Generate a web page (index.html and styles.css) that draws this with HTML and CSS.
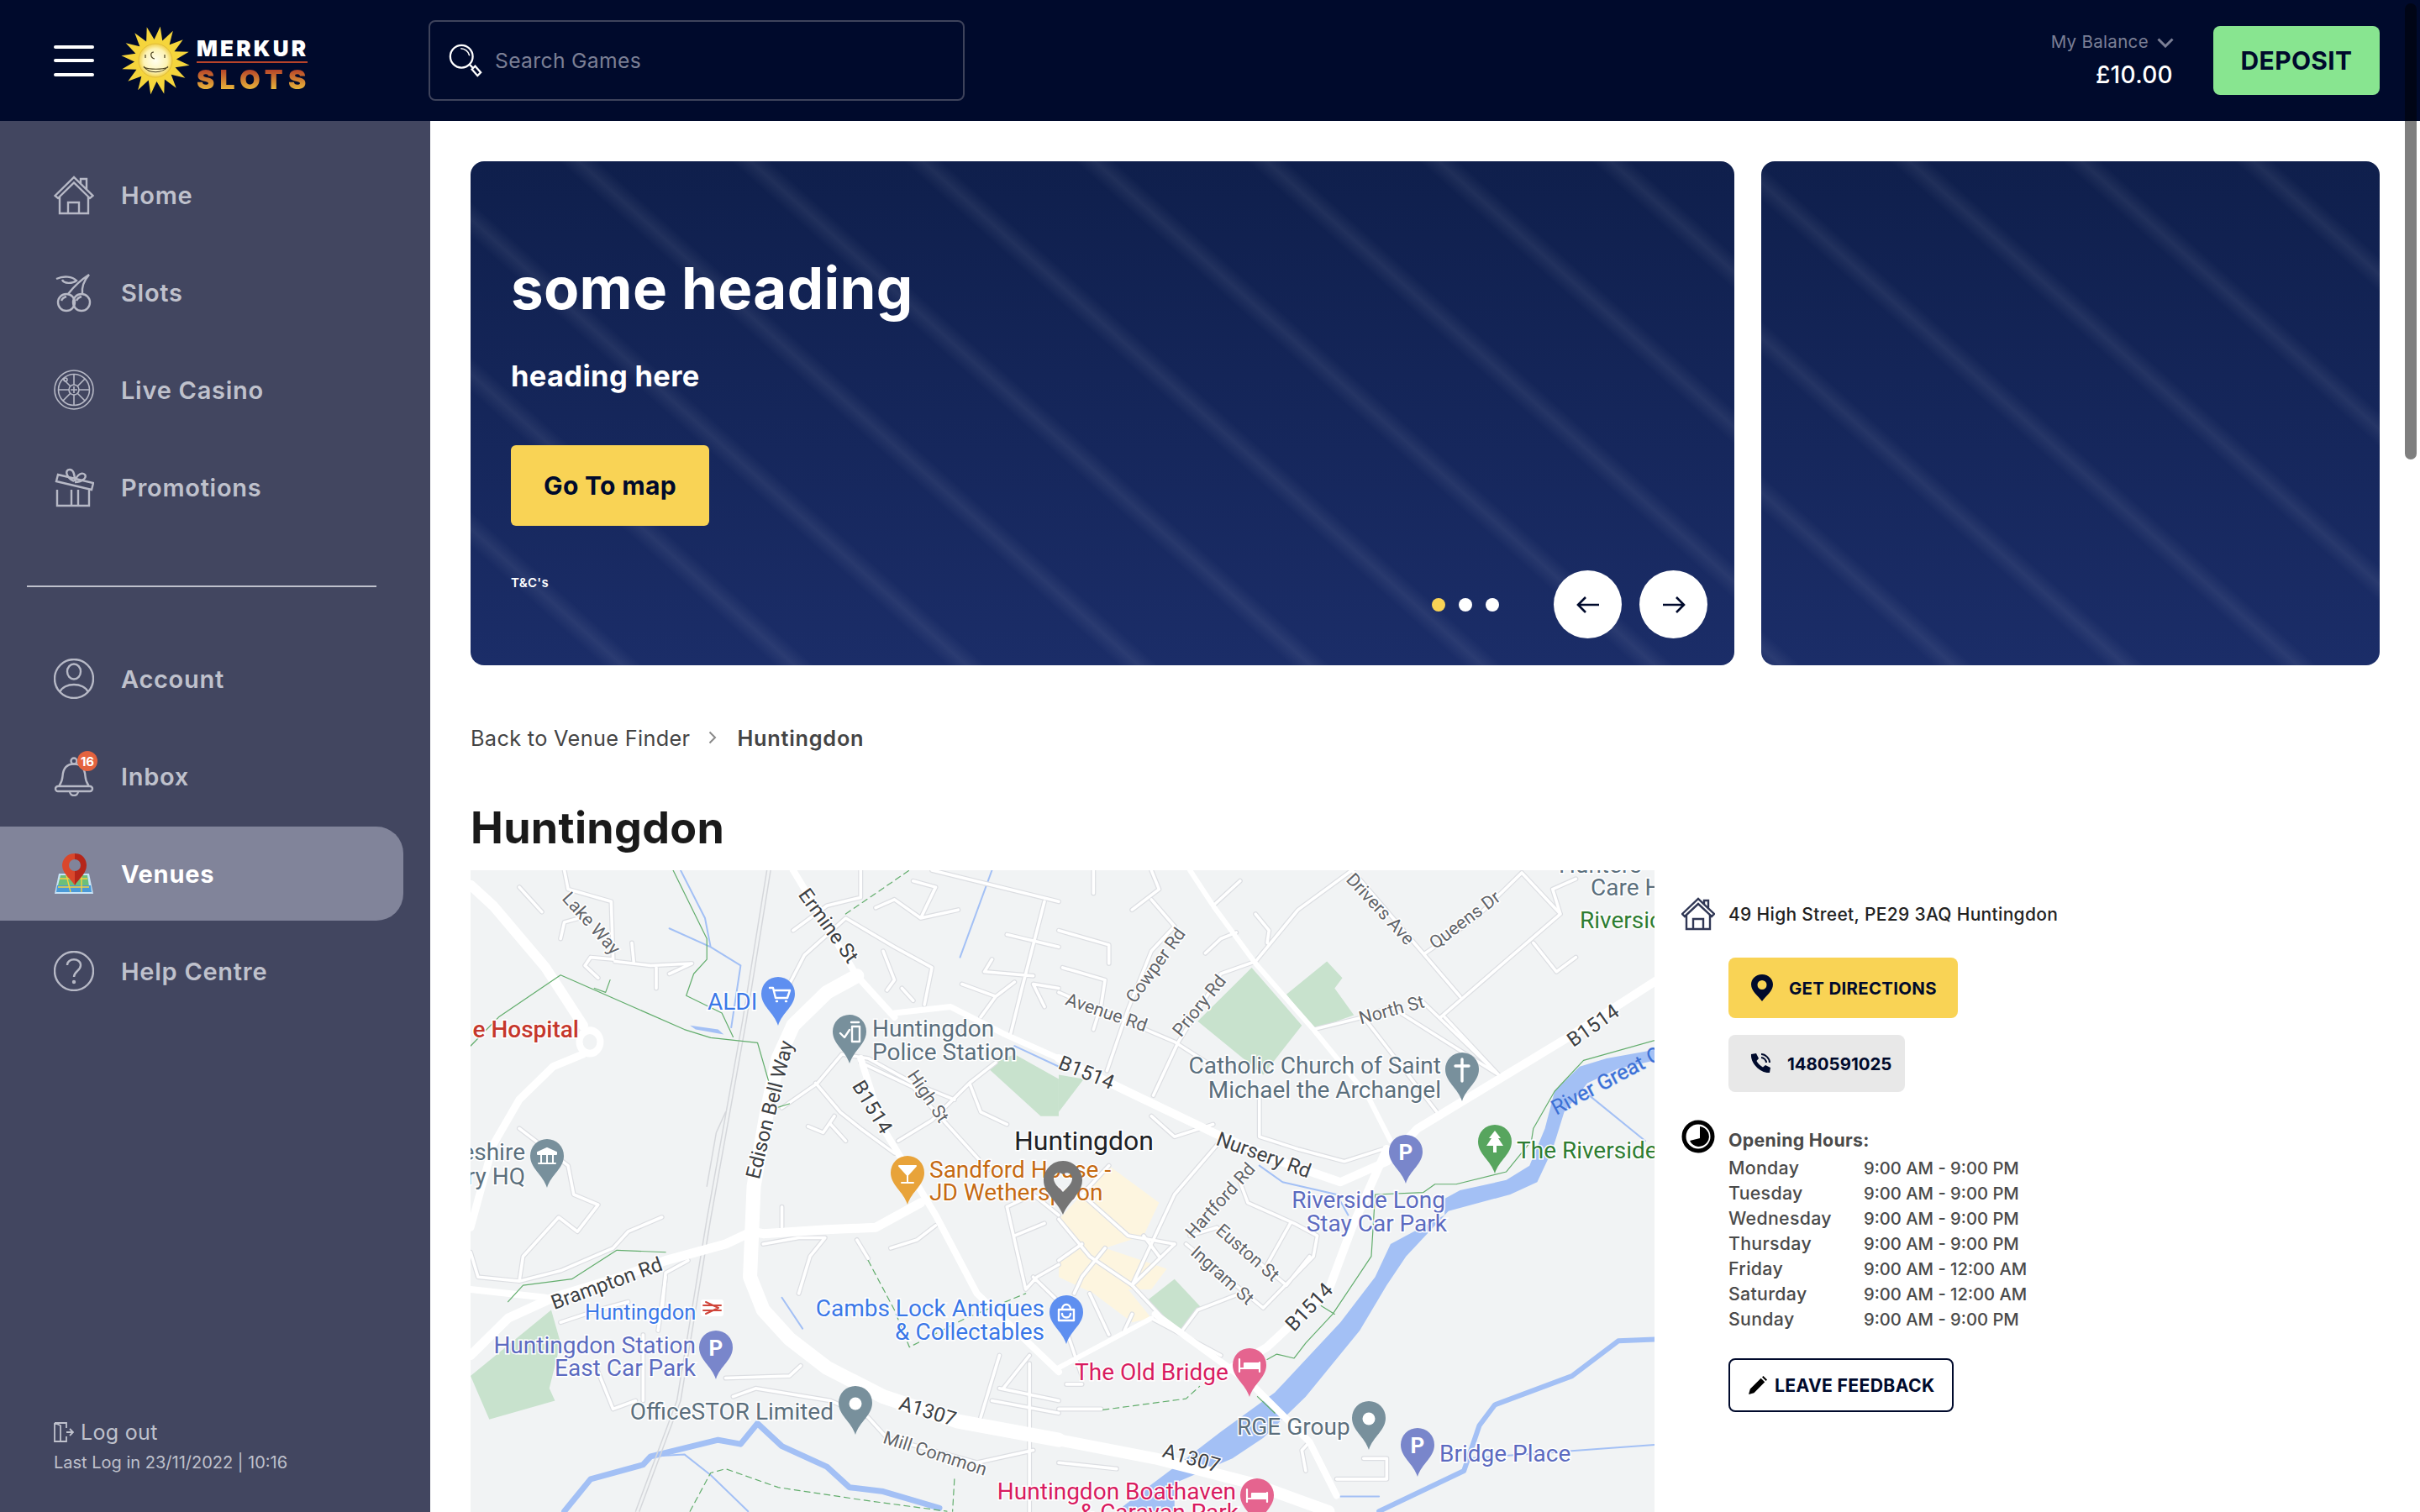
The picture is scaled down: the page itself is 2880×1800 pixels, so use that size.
FILE: index.html
```html
<!DOCTYPE html>
<html lang="en">
<head>
  <meta charset="UTF-8" />
  <title>Huntingdon - Merkur Slots</title>
  <link rel="stylesheet" href="styles.css">
</head>
<body>

<header class="topbar">
  <div class="burger"><span></span><span></span><span></span></div>
  <a class="logo">
    <svg class="logo-sun" viewBox="-42 -42 84 84">
      <defs>
        <radialGradient id="face"><stop offset="0" stop-color="#fffef0"/><stop offset=".7" stop-color="#fdf3b4"/><stop offset="1" stop-color="#f0d048"/></radialGradient>
      </defs>
      <polygon fill="#f5d53c" transform="rotate(8)" points="41,0 24.5,4.9 37.9,15.7 20.8,13.9 29,29 13.9,20.8 15.7,37.9 4.9,24.5 0,41 -4.9,24.5 -15.7,37.9 -13.9,20.8 -29,29 -20.8,13.9 -37.9,15.7 -24.5,4.9 -41,0 -24.5,-4.9 -37.9,-15.7 -20.8,-13.9 -29,-29 -13.9,-20.8 -15.7,-37.9 -4.9,-24.5 0,-41 4.9,-24.5 15.7,-37.9 13.9,-20.8 29,-29 20.8,-13.9 37.9,-15.7 24.5,-4.9"/>
      <circle r="20" fill="url(#face)" stroke="#e3bd3a"/>
      <path d="M-14 7 C-8 16 8 16 15 7 M-14 8 C-7 11 8 11 15 8 M-2 -10 C-7 -10 -6 -3 -1 -2 M-12 -7 v4 M11 -7 v4" fill="none" stroke="#4a4020" stroke-width="1.2"/>
    </svg>
    <span class="logo-words">
      <span class="logo-merkur">MERKUR</span>
      <span class="logo-slots">SLOTS</span>
    </span>
  </a>
  <div class="search">
    <svg class="search-icon" viewBox="0 0 44 44">
      <circle cx="17" cy="17" r="14" fill="none" stroke="#fff" stroke-width="2.4"/>
      <path d="M16 7 C21 7 26 11 27 16" fill="none" stroke="#fff" stroke-width="1.6"/>
      <path d="M27 27 L31 31 M30 33 L34 29 L41 37 L37 41Z" fill="none" stroke="#fff" stroke-width="2.4"/>
    </svg>
    <span>Search Games</span>
  </div>
  <div class="balance">
    <div class="balance-label">My Balance
      <svg viewBox="0 0 20 12" class="balance-chev"><path d="M1.5 1.5 L10 10 L18.5 1.5" fill="none" stroke="#7b7f95" stroke-width="3"/></svg>
    </div>
    <div class="balance-amount">£10.00</div>
  </div>
  <a class="deposit">DEPOSIT</a>
</header>

<div class="page">
  <nav class="sidebar">
    <a class="nav-item">
      <svg class="nav-icon" viewBox="0 0 48 48"><path d="M1.5 25 L24 3 L46.5 25 L43 28 L24 9.5 L5 28Z M7 26 V46 H41 V26 M17 46 V33 H30 V46 M32 10 V5 H39 V17"/></svg>
      Home
    </a>
    <a class="nav-item">
      <svg class="nav-icon" viewBox="0 0 48 48"><circle cx="15" cy="36" r="10"/><circle cx="33" cy="36" r="10"/><path d="M9 34 C10 31 12 30 15 29 M27 34 C28 31 30 30 33 29 M17 26 C24 17 31 10 42 3 C36 10 33 18 34 26 M3 8 C12 4 22 5 27 10 C22 14 12 14 10 9"/></svg>
      Slots
    </a>
    <a class="nav-item">
      <svg class="nav-icon thin" viewBox="0 0 48 48"><circle cx="24" cy="24" r="23"/><circle cx="24" cy="24" r="18.5"/><circle cx="24" cy="24" r="6"/><path d="M24 20 V28 M20 24 H28 M24 5.5 V18 M24 30 V42.5 M5.5 24 H18 M30 24 H42.5 M11 11 L19.5 19.5 M28.5 28.5 L37 37 M37 11 L28.5 19.5 M19.5 28.5 L11 37"/><circle cx="14" cy="12" r="2"/></svg>
      Live Casino
    </a>
    <a class="nav-item">
      <svg class="nav-icon" viewBox="0 0 48 48"><path d="M4 27 V46 H42 V27 M21 27 V46 M29 27 V46 M3 17 L45 27 L47 19 L5 9Z M24 17 C14 12 13 3 19 3 C24 3 25 10 25 17 C28 8 34 6 37 9 C40 13 33 18 25 18"/></svg>
      Promotions
    </a>
    <div class="nav-rule"></div>
    <a class="nav-item">
      <svg class="nav-icon" viewBox="0 0 48 48"><circle cx="24" cy="24" r="23"/><ellipse cx="24" cy="15.5" rx="8" ry="9"/><path d="M7 40 C12 28 36 28 41 40"/></svg>
      Account
    </a>
    <a class="nav-item">
      <span class="bell">
        <svg class="nav-icon" viewBox="0 0 48 48"><circle cx="24" cy="6" r="3.5"/><path d="M24 9.5 C14 9.5 11 16 10.5 24 C10 31 8 33 6 36 H42 C40 33 38 31 37.5 24 C37 16 34 9.5 24 9.5Z M5 36 H43 A3 3 0 0 1 43 42 H5 A3 3 0 0 1 5 36Z M19 42 A5 5 0 0 0 29 42"/></svg>
        <span class="badge">16</span>
      </span>
      Inbox
    </a>
    <a class="nav-item active">
      <svg class="nav-icon plain" viewBox="0 0 48 48">
        <path d="M6 24 H42 L47 48 H1Z" fill="#c7e4f8"/>
        <path d="M8 26 H24 V38 H5Z" fill="#6cbf7a"/>
        <path d="M24 26 H40 L43 46 H24Z" fill="#6cbf7a"/>
        <path d="M4 38 H44 L45 46 H3Z" fill="#4a9ad8"/>
        <path d="M7 30 H40 M5 40 H42 M15 26 L20 46 M33 26 L33 46" fill="none" stroke="#f6d23f" stroke-width="1.4"/>
        <path d="M25 0 C15 0 10 8 10 14 C10 24 20 30 25 38Z" fill="#d9472b"/>
        <path d="M25 0 C35 0 39 8 39 14 C39 24 30 30 25 38Z" fill="#b5261a"/>
        <circle cx="25" cy="14" r="7" fill="#81849a"/>
      </svg>
      Venues
    </a>
    <a class="nav-item">
      <svg class="nav-icon" viewBox="0 0 48 48"><circle cx="24" cy="24" r="23"/><path d="M16 17 C16 8 32 8 32 17 C32 24 24 24 24 31"/><circle cx="24" cy="37" r="1"/></svg>
      Help Centre
    </a>
    <div class="side-foot">
      <div class="logout">
        <svg viewBox="0 0 24 26"><path d="M1 2 H15 V8 M15 18 V24 H8 M1 2 V24 H8 V5 L1 2 M15 13 H23 M19 9 L23 13 L19 17" fill="none" stroke="#bfc1cc" stroke-width="1.8"/></svg>
        Log out
      </div>
      <div class="last-log">Last Log in 23/11/2022 | 10:16</div>
    </div>
  </nav>

  <main class="content">
    <section class="hero">
      <div class="slide slide-main">
        <h1 class="slide-title">some heading</h1>
        <h2 class="slide-sub">heading here</h2>
        <a class="slide-btn">Go To map</a>
        <div class="slide-terms">T&amp;C's</div>
        <div class="slide-controls">
          <span class="dot on"></span><span class="dot"></span><span class="dot"></span>
          <span class="arrow first"><svg viewBox="0 0 28 22"><path d="M27 11 H2 M11 2 L2 11 L11 20" fill="none" stroke="#000a2c" stroke-width="2.6"/></svg></span>
          <span class="arrow"><svg viewBox="0 0 28 22"><path d="M1 11 H26 M17 2 L26 11 L17 20" fill="none" stroke="#000a2c" stroke-width="2.6"/></svg></span>
        </div>
      </div>
      <div class="slide slide-next"></div>
    </section>

    <div class="crumbs">
      <span>Back to Venue Finder</span>
      <svg viewBox="0 0 10 16"><path d="M1.5 1.5 L8 8 L1.5 14.5" fill="none" stroke="#8a8a8a" stroke-width="2"/></svg>
      <b>Huntingdon</b>
    </div>
    <h2 class="venue-name">Huntingdon</h2>

    <div class="venue">
      <svg class="map" viewBox="0 0 1409 765">
        <defs>
          <path id="pin" fill="inherit" d="M20 0 A20 20 0 0 1 40 20 C40 35 25 42 20 58 C15 42 0 35 0 20 A20 20 0 0 1 20 0Z"/>
          <g id="minor">
            <g transform="scale(.4464 .4911) translate(0 -14)">
              <path d="M130 55 L190 115 M250 14 L260 60 L375 90 L380 230 L320 225 L305 245 L340 275 M240 180 L250 140 L290 130 M385 235 L480 245 L590 240 L530 265 M495 250 V300 M430 190 L435 235"/>
              <path d="M130 640 L260 730 L275 800 L340 825 L285 890 L235 855 L140 950 L130 1010 L20 1000 L0 940 M510 855 L420 890 L380 930 L240 985 L130 1010 M580 960 L520 990 L510 1090"/>
              <path d="M830 590 L925 530 L990 460 L1060 470 L1180 530 L1290 570 M850 290 L890 220 L1000 130 L1130 200 L1230 250 L1210 340 M860 160 L950 100 L1040 80 L1040 14 M1080 105 L1130 85 L1200 130 L1300 110 M1180 40 L1240 55 L1200 130 M1100 210 L1130 280 L1110 305 M1150 300 L1180 330"/>
              <path d="M1230 14 L1568 90 M1430 170 L1568 200 M1530 90 L1470 300 L1440 410 M1310 290 L1400 320 L1450 285 M1400 320 L1360 370 M1390 230 L1370 260 L1500 270 M1568 300 L1500 290 L1530 345"/>
              <path d="M920 530 L985 600 L1040 640 L1130 700 M900 635 L940 650 L970 610 M960 630 L1000 670 M1040 480 L1180 540 L1320 680 L1380 740 M1140 670 L1230 620 L1330 530 L1400 480 M1330 530 L1360 600 L1430 630"/>
              <path d="M780 920 L875 905 L945 905 L905 950 L875 1040 M830 880 V830 M1030 910 L1060 955 M1120 930 L1190 910 L1240 875 M1430 830 L1480 1030 L1510 1000 L1568 970 M1430 830 L1500 800 L1568 850 M1450 900 L1530 870 M1500 1000 L1568 1060"/>
              <path d="M1410 1190 L1360 1340 M1490 1210 V1568 M1410 1270 L1568 1300 M1390 1300 L1568 1330 M1490 1190 L1420 1270 M700 1290 L760 1270 L960 1300 L1060 1340 L1110 1390 L1350 1450 L1500 1420 M680 1245 L850 1240 L880 1215 M340 1230 L380 1320 L440 1300 M240 1110 L340 1080 L420 1060 M460 1140 L460 1300 M520 1000 L500 1130"/>
            </g>
            <g transform="translate(700 0) scale(.4592 .4911) translate(0 -14)">
              <path d="M0 160 L130 195 L130 240 M10 250 L120 280 L110 340 L90 400 M90 14 V70 M190 110 L260 60 L240 14 M240 85 L300 150 M400 100 L470 40 M0 310 L300 430 L400 490 M510 235 L620 110 L760 14 M510 120 L545 160 L540 190 M380 215 L420 180 L460 165"/>
              <path d="M125 500 L180 350 L240 210 L300 150 M245 560 L310 430 L420 265 L510 235 M660 400 L790 370 L860 345 M790 370 L980 600 M860 345 L1140 510 M940 330 L1140 510 M1040 320 L760 14 M990 370 L1300 120 L1200 20 L1080 130 L950 215 M1000 370 L1140 510 M1230 190 L1290 260 L1340 225 M1280 60 L1340 35 M1300 120 L1280 60"/>
              <path d="M520 560 V660 L620 690 L740 720 L840 690 M240 610 L300 660 L400 630 M470 770 L490 820 L610 870 L670 900 L660 950 L530 1075 M600 870 L540 970 M410 880 L590 1020 M590 1020 L650 950 M340 900 L410 880 M330 920 L530 1075"/>
              <path d="M410 680 L300 800 L190 1020 L300 1130 M300 920 L190 1020 M470 1040 L360 1080 L320 1130 M240 1100 L420 1190 M80 1040 L130 1140 M190 1090 L170 1130 M650 1400 L630 1420 L640 1470 M790 1440 H850 V1490 H720 M0 1320 L110 1320 M0 1450 L150 1465 M20 1260 H60"/>
              <path d="M0 860 L80 950 L190 1020 M60 800 L180 900 L300 920 M130 730 L60 800 M0 960 L60 920 M120 930 L60 1000 L40 1040 M220 900 L260 950 M20 1130 L60 1240"/>
            </g>
          </g>
        </defs>

        <!-- land use -->
        <g transform="translate(700 0) scale(.4592 .4911) translate(0 -14)">
          <polygon class="m-town" points="130,730 260,820 220,900 120,930 280,980 240,1030 180,1030 240,1100 190,1110 90,1040 0,1000 0,960 50,920 0,860 60,800"/>
          <polygon class="m-park" points="360,380 500,250 630,390 530,510"/>
          <polygon class="m-park" points="590,315 695,235 735,275 715,300 765,365 660,400"/>
          <polygon class="m-park" points="0,510 65,520 0,600"/>
          <polygon class="m-park" points="225,1060 300,1005 370,1075 320,1130"/>
          <polygon class="m-water" points="1568,445 1420,470 1350,490 1285,550 1260,640 1220,730 1160,765 1040,790 1000,810 1000,850 860,920 820,1000 730,1110 560,1280 420,1375 330,1440 230,1510 150,1568 300,1568 300,1500 450,1440 530,1390 640,1290 780,1130 850,1020 900,950 1010,840 1170,800 1240,770 1280,690 1310,600 1370,530 1450,495 1568,470"/>
          <path class="m-river w6" d="M830 1568 L1050 1470 L1090 1360 L1130 1310 L1330 1240 L1450 1155 L1568 1150"/>
          <path class="m-river w2" d="M1060 1440 L1568 1405 M1375 560 L1520 670 M520 730 L580 770 L720 800 L750 850 M730 1532 H830"/>
        </g>
        <g transform="scale(.4464 .4911) translate(0 -14)">
          <polygon class="m-park" points="0,1240 215,1080 240,1160 210,1270 225,1300 50,1345"/>
          <polygon class="m-park" points="1375,490 1450,460 1568,520 1568,610 1520,610"/>
          <polygon class="m-water" points="585,390 660,400 675,412 600,400"/>
          <path class="m-river w2" d="M530 155 L640 200 L720 245 L695 395 M560 14 L625 130 L640 200 M1390 14 L1305 225 M830 1050 L885 1125 M1450 440 L1568 490 M480 1435 L570 1430 L640 1480 L740 1568"/>
          <path class="m-river w7" d="M250 1568 L320 1490 L460 1455 L480 1435 L660 1395 L720 1405 L765 1355 L830 1410 L950 1460 L1010 1510 L1100 1520 L1250 1560"/>
        </g>

        <!-- roads -->
        <use href="#minor" class="m-case"/>
        <use href="#minor" class="m-minor"/>
        <g transform="scale(.4464 .4911) translate(0 -14)">
          <g class="m-rail">
            <path d="M800 14 L735 380 L640 860 L560 1300 L450 1568 M790 14 L725 380 L630 860 L550 1300 L440 1568 M680 600 L655 650 L630 780"/>
          </g>
          <path class="m-road w12" d="M0 50 L60 100 L200 250 L300 390"/>
          <path class="m-road w9" d="M300 460 L220 490 L130 570 L60 680 L0 880"/>
          <circle class="m-round" cx="318" cy="430" r="28"/>
          <path class="m-road w17" d="M1030 270 L950 310 L860 390 L820 470 L790 600 L755 780 L750 890 L745 1000 L780 1080 L850 1150 L950 1220 L1100 1290 L1300 1350 L1568 1395"/>
          <path class="m-road w11" d="M0 1190 L100 1100 L220 1050 L400 1000 L520 960 L680 920 L750 890 L780 895 L950 885 L1080 880 L1200 820"/>
          <path class="m-road w8" d="M0 1030 L200 1050"/>
          <path class="m-road w8" d="M860 14 L1030 270 L1130 370 M1040 470 L1100 640 L1240 850 L1350 1040 L1568 1230"/>
          <path class="m-road w7" d="M1130 360 L1280 345 L1420 410 L1568 470"/>
        </g>
        <g transform="translate(700 0) scale(.4592 .4911) translate(0 -14)">
          <path class="m-road w6" d="M340 14 L400 100 L510 240 L660 400 L800 560 L860 670"/>
          <path class="m-road w14" d="M0 1395 L250 1440 L500 1500 L700 1568"/>
          <path class="m-road w10" d="M0 470 L200 560 L400 650 L560 715 L730 770 L850 720 L930 640 L1310 425 L1568 270"/>
          <path class="m-road w10" d="M850 690 L760 880 L700 1030 L540 1170 L430 1230"/>
          <path class="m-road w8" d="M250 1090 L500 1260 L650 1400 L720 1530"/>
          <path class="m-road w6" d="M0 1220 L240 1100"/>
        </g>

        <!-- footpaths -->
        <g transform="scale(.4464 .4911) translate(0 -14)">
          <path class="m-path" d="M540 14 L630 180 L630 230 L595 265 L575 318 L670 360 L700 418 M0 440 L75 370 L240 268 L570 400 L640 420 L765 432 L785 495 L815 590 L850 580 M330 300 L360 310 L372 280 M100 1060 L140 1020 L270 1005 L390 935 L520 940"/>
          <path class="m-path dash" d="M1000 120 L1170 14 M1060 960 L1130 1080 L1170 1170 L1320 1100 L1480 1040 M585 1568 L640 1475 L680 1465 L820 1510 L1040 1540 L1270 1568 M1290 1490 L1285 1568"/>
        </g>
        <g transform="translate(700 0) scale(.4592 .4911) translate(0 -14)">
          <path class="m-path" d="M1568 420 L1360 475 L1285 550 L1230 640 L1225 670 L1160 745 L1030 775 L975 775 L945 795 L820 800 L810 950 L710 1090 L640 1160 L610 1197 L565 1187 L540 1200 M680 1070 L715 1090 M515 1290 L560 1330"/>
          <path class="m-path dash" d="M115 1322 L330 1295 L365 1265"/>
        </g>

        <!-- road names -->
        <g class="m-names small">
          <text transform="translate(144 63) rotate(48)">Lake Way</text>
          <text transform="translate(545 269) rotate(56)">High St</text>
          <text transform="translate(553 694) rotate(18)">Mill Common</text>
          <text transform="translate(757 169) rotate(19)">Avenue Rd</text>
          <text transform="translate(815 113) rotate(-54)">Cowper Rd</text>
          <text transform="translate(867 161) rotate(-51)">Priory Rd</text>
          <text transform="translate(1083 46) rotate(47)">Drivers Ave</text>
          <text transform="translate(1183 59) rotate(-37)">Queens Dr</text>
          <text transform="translate(1096 166) rotate(-15)">North St</text>
          <text transform="translate(892 393) rotate(-48)">Hartford Rd</text>
          <text transform="translate(925 455) rotate(41)">Euston St</text>
          <text transform="translate(895 482) rotate(42)">Ingram St</text>
        </g>
        <g class="m-names">
          <text transform="translate(426 66) rotate(54)">Ermine St</text>
          <text transform="translate(356 285) rotate(-76)">Edison Bell Way</text>
          <text transform="translate(478 282) rotate(59)">B1514</text>
          <text transform="translate(162 492) rotate(-20)">Brampton Rd</text>
          <text transform="translate(544 644) rotate(17)">A1307</text>
          <text transform="translate(733 241) rotate(22)">B1514</text>
          <text transform="translate(1336 185) rotate(-35)">B1514</text>
          <text transform="translate(998 520) rotate(-46)">B1514</text>
          <text transform="translate(944 339) rotate(20)">Nursery Rd</text>
          <text transform="translate(858 700) rotate(16)">A1307</text>
        </g>
        <text class="m-label river" transform="translate(1292 292) rotate(-28)">River Great Ouse</text>

        <!-- place labels -->
        <text class="m-label l-blue" x="282" y="166">ALDI</text>
        <text class="m-label l-red end" x="129" y="199">e Hospital</text>
        <text class="m-label l-slate" x="478" y="198">Huntingdon</text>
        <text class="m-label l-slate" x="478" y="226">Police Station</text>
        <text class="m-label l-slate end" x="65" y="345">eshire</text>
        <text class="m-label l-slate end" x="65" y="374">ry HQ</text>
        <text class="m-label l-blue station" x="136" y="535">Huntingdon</text>
        <text class="m-label l-purple end" x="268" y="575">Huntingdon Station</text>
        <text class="m-label l-purple end" x="268" y="602">East Car Park</text>
        <text class="m-label l-slate end" x="432" y="654">OfficeSTOR Limited</text>
        <text class="m-label l-orange" x="546" y="366">Sandford House -</text>
        <text class="m-label l-orange" x="546" y="393">JD Wetherspoon</text>
        <text class="m-town-name" x="647" y="333">Huntingdon</text>
        <text class="m-label l-blue end" x="683" y="531">Cambs Lock Antiques</text>
        <text class="m-label l-blue end" x="683" y="559">&amp; Collectables</text>
        <text class="m-label l-slate end" x="1155" y="242">Catholic Church of Saint</text>
        <text class="m-label l-slate end" x="1155" y="271">Michael the Archangel</text>
        <text class="m-label l-slate" x="1295" y="3">Hunters</text>
        <text class="m-label l-slate" x="1333" y="30">Care H</text>
        <text class="m-label l-green" x="1320" y="69">Riversic</text>
        <text class="m-label l-green" x="1245" y="343">The Riverside</text>
        <text class="m-label l-purple end" x="1160" y="402">Riverside Long</text>
        <text class="m-label l-purple end" x="1162" y="430">Stay Car Park</text>
        <text class="m-label l-pink" x="719" y="607">The Old Bridge</text>
        <text class="m-label l-slate" x="912" y="672">RGE Group</text>
        <text class="m-label l-purple" x="1153" y="704">Bridge Place</text>
        <text class="m-label l-pink end" x="911" y="749">Huntingdon Boathaven</text>
        <text class="m-label l-pink end" x="914" y="774">&amp; Caravan Park</text>

        <!-- pins -->
        <g transform="translate(346 127)"><use href="#pin" fill="#5e8ff0"/><path d="M10 13 H14 L17 25 H31 L34 16 H15 M18 29 h1 M29 29 h1" fill="none" stroke="#fff" stroke-width="2.4"/></g>
        <g transform="translate(431 172)"><use href="#pin" fill="#78909c"/><path d="M9 22 L14 27 L20 18 M22 9 H31 M23 14 V32 H32 V14Z" fill="none" stroke="#fff" stroke-width="2.4"/></g>
        <g transform="translate(71 320)"><use href="#pin" fill="#78909c"/><path d="M9 16 L20 11 L31 16 V18 H9Z M10 29 H30 M13 19 V28 M20 19 V28 M27 19 V28" fill="#fff" stroke="#fff" stroke-width="2"/></g>
        <g transform="translate(272 548)"><use href="#pin" fill="#7986cb"/><text class="pin-p" x="20" y="30">P</text></g>
        <g transform="translate(438 614)"><use href="#pin" fill="#78909c"/><circle cx="20" cy="21" r="7.5" fill="#fff"/></g>
        <g transform="translate(500 340)"><use href="#pin" fill="#e8a33a"/><path d="M10 12 H30 L20 23Z M20 23 V31 M13 32 H27" fill="#fff" stroke="#fff" stroke-width="2"/></g>
        <g transform="translate(689 506)"><use href="#pin" fill="#5e8ff0"/><path d="M11 17 H29 V30 H11Z M15 17 C15 9 25 9 25 17 M15 22 C15 28 25 28 25 22" fill="none" stroke="#fff" stroke-width="2.4"/></g>
        <g transform="translate(1160 217)"><use href="#pin" fill="#78909c"/><path d="M20 8 V34 M12 16 H28" fill="none" stroke="#fff" stroke-width="3.4"/></g>
        <g transform="translate(1199 303)"><use href="#pin" fill="#57a55e"/><path d="M20 7 L27 16 H24 L30 25 H10 L16 16 H13Z M18 25 H22 V33 H18Z" fill="#fff"/></g>
        <g transform="translate(1093 315)"><use href="#pin" fill="#7986cb"/><text class="pin-p" x="20" y="30">P</text></g>
        <g transform="translate(1107 664)"><use href="#pin" fill="#7986cb"/><text class="pin-p" x="20" y="30">P</text></g>
        <g transform="translate(907 569)"><use href="#pin" fill="#e5648f"/><path d="M8 13 V28 M32 17 V28 M8 24 H32 M14 18 H31 V24 H14Z" fill="#fff" stroke="#fff" stroke-width="2.2"/></g>
        <g transform="translate(1049 632)"><use href="#pin" fill="#78909c"/><circle cx="20" cy="21" r="7.5" fill="#fff"/></g>
        <g transform="translate(916 724)"><use href="#pin" fill="#e5648f"/><path d="M8 13 V28 M32 17 V28 M8 24 H32 M14 18 H31 V24 H14Z" fill="#fff" stroke="#fff" stroke-width="2.2"/></g>
        <g transform="translate(277 517)"><rect x="-3" y="-6" width="27" height="20" rx="3" fill="#fff"/><path d="M0 1 H21 M0 7 H21 M3 -3 L18 4 L3 11" fill="none" stroke="#d0463b" stroke-width="2"/></g>
        <path fill="#757575" fill-rule="evenodd" d="M705 346 C719 346 728 358 728 369 C728 385 712 393 705 410 C698 393 682 385 682 369 C682 358 691 346 705 346Z M705 362 C700 358 694 361 694 367 C694 373 700 378 705 383 C710 378 716 373 716 367 C716 361 710 358 705 362Z"/>
      </svg>

      <aside class="details">
        <div class="detail-row">
          <svg class="detail-icon" viewBox="0 0 40 40"><path d="M1 20 L20 2 L39 20 L36 23 L20 8 L4 23Z M6 21 V38 H34 V21 M14 38 V26 H26 V38 M27 8 V4 H32 V13" fill="none" stroke="#303755" stroke-width="2.4"/></svg>
          <div class="address">49 High Street, PE29 3AQ Huntingdon</div>
        </div>
        <a class="act act-directions">
          <svg viewBox="0 0 26 32"><path fill-rule="evenodd" fill="#000a2c" d="M13 0 C21 0 26 6 26 12 C26 20 18 25 13 32 C8 25 0 20 0 12 C0 6 5 0 13 0Z M13 7 A5.5 5.5 0 1 0 13 18 A5.5 5.5 0 1 0 13 7Z"/></svg>
          GET DIRECTIONS
        </a>
        <a class="act act-phone">
          <svg viewBox="0 0 24 24"><path fill="#000a2c" d="M1 1 L7 0 L10 6 L7.5 9 C9 12 12 15 15 16.5 L18 14 L24 17 L23 23 C12 24 0 12 1 1Z"/><path d="M13 5 C16 5 19 8 19 11 M13 1 C18 1 23 6 23 11" fill="none" stroke="#000a2c" stroke-width="2"/></svg>
          1480591025
        </a>
        <div class="detail-row hours-row">
          <svg class="detail-icon" viewBox="0 0 40 40"><circle cx="20" cy="20" r="17" fill="#fff" stroke="#000" stroke-width="5"/><path d="M22 8 A12 12 0 1 1 10 25 L22 22Z" fill="#000"/></svg>
          <div class="hours">
            <div class="hours-title">Opening Hours:</div>
            <div class="hours-grid">
              <span>Monday</span><span>9:00 AM - 9:00 PM</span>
              <span>Tuesday</span><span>9:00 AM - 9:00 PM</span>
              <span>Wednesday</span><span>9:00 AM - 9:00 PM</span>
              <span>Thursday</span><span>9:00 AM - 9:00 PM</span>
              <span>Friday</span><span>9:00 AM - 12:00 AM</span>
              <span>Saturday</span><span>9:00 AM - 12:00 AM</span>
              <span>Sunday</span><span>9:00 AM - 9:00 PM</span>
            </div>
          </div>
        </div>
        <a class="act act-feedback">
          <svg viewBox="0 0 24 24"><path fill="#000" d="M0 24 L2 17 L16 3 L21 8 L7 22Z M17.5 1.5 L19 0 L24 5 L22.5 6.5Z"/></svg>
          LEAVE FEEDBACK
        </a>
      </aside>
    </div>
  </main>
</div>

<div class="scroll-thumb"></div>

</body>
</html>
```

FILE: styles.css
```css
* {
  box-sizing: border-box;
}
html, body {
  height: 100%;
}
body {
  margin: 0;
  overflow: hidden;
  background: #fff;
  font-family: Inter, "Liberation Sans", sans-serif;
  color: #000a2c;
  letter-spacing: .02em;
}
h1, h2 {
  margin: 0;
}

/* top bar */
.topbar {
  height: 144px;
  background: #000a2c;
  display: flex;
  align-items: center;
  padding: 0 48px 0 64px;
}
.burger {
  width: 48px;
  display: flex;
  flex-direction: column;
  gap: 12.5px;
}
.burger span {
  height: 4px;
  border-radius: 2px;
  background: #fff;
}
.logo {
  display: flex;
  align-items: center;
  margin-left: 31px;
  width: 222px;
}
.logo-sun {
  width: 84px;
  height: 84px;
  flex: none;
}
.logo-words {
  display: flex;
  flex-direction: column;
  margin: 11px 0 0 7px;
  width: 132px;
  white-space: nowrap;
}
.logo-merkur {
  font-size: 26px;
  line-height: 27px;
  font-weight: 900;
  color: #fff;
  letter-spacing: 3.2px;
  border-bottom: 2px solid #b8432a;
  padding-bottom: 2px;
}
.logo-slots {
  font-size: 32px;
  line-height: 32px;
  font-weight: 900;
  letter-spacing: 6.2px;
  margin-top: 4px;
  background: linear-gradient(#b8482a 15%, #e8b53a 85%);
  -webkit-background-clip: text;
  background-clip: text;
  color: transparent;
}
.search {
  margin-left: 145px;
  width: 638px;
  height: 96px;
  border: 2px solid #3e435b;
  border-radius: 8px;
  display: flex;
  align-items: center;
  padding-left: 21px;
  gap: 14px;
  font-size: 24.7px;
  color: #7b7f95;
}
.search-icon {
  width: 42px;
  height: 42px;
}
.balance {
  margin-left: auto;
  margin-right: 48px;
  text-align: right;
}
.balance-label {
  font-size: 20.5px;
  color: #7b7f95;
  line-height: 30px;
  margin-right: -1px;
}
.balance-chev {
  width: 20px;
  height: 12px;
  margin-left: 4px;
}
.balance-amount {
  font-size: 28px;
  font-weight: 500;
  color: #fff;
  line-height: 40px;
  margin-top: 4px;
}
.deposit {
  width: 198px;
  height: 82px;
  border-radius: 8px;
  background: #88e590;
  display: flex;
  align-items: center;
  justify-content: center;
  font-size: 30px;
  font-weight: 700;
}

/* page body */
.page {
  display: flex;
  height: 1656px;
}
.sidebar {
  width: 512px;
  flex: none;
  background: #424660;
  padding: 32px 32px 0 0;
  display: flex;
  flex-direction: column;
  gap: 4px;
  color: #bfc1cc;
}
.nav-item {
  height: 112px;
  display: flex;
  align-items: center;
  gap: 32px;
  padding-left: 64px;
  font-size: 29px;
  font-weight: 600;
  letter-spacing: .025em;
  border-radius: 0 32px 32px 0;
}
.nav-item.active {
  background: #81849a;
  color: #fff;
  font-weight: 700;
}
.nav-icon {
  width: 48px;
  height: 48px;
  flex: none;
  fill: none;
  stroke: #b7b9c6;
  stroke-width: 2.4;
}
.nav-icon.thin {
  stroke-width: 1.6;
}
.nav-icon.plain {
  stroke: none;
}
.nav-rule {
  height: 2px;
  margin: 57px 0 49px 32px;
  width: 416px;
  background: #bfc1cc;
}
.bell {
  position: relative;
  display: flex;
}
.badge {
  position: absolute;
  top: -6px;
  left: 28px;
  width: 24px;
  height: 24px;
  border-radius: 50%;
  background: #e4633f;
  color: #fff;
  font-size: 15px;
  font-weight: 700;
  letter-spacing: 0;
  display: flex;
  align-items: center;
  justify-content: center;
}
.side-foot {
  margin-top: auto;
  padding: 0 0 44px 64px;
}
.logout {
  display: flex;
  align-items: center;
  gap: 8px;
  font-size: 25px;
  line-height: 36px;
}
.logout svg {
  width: 24px;
  height: 26px;
}
.last-log {
  font-size: 20px;
  line-height: 30px;
  margin-top: 3px;
  letter-spacing: 0;
}

/* main column */
.content {
  flex: 1;
  min-width: 0;
  padding: 48px 48px 0;
}
.hero {
  display: flex;
  gap: 32px;
}
.slide {
  height: 600px;
  border-radius: 16px;
}
.slide-main {
  width: 1504px;
  position: relative;
  padding: 111px 48px 0;
  color: #fff;
  background:
    repeating-linear-gradient(42deg, transparent 0, transparent 105px, rgba(255,255,255,.07) 121px, transparent 137px),
    linear-gradient(#0f1f4c, #1b2d68);
}
.slide-next {
  width: 736px;
  background:
    repeating-linear-gradient(42deg, rgba(255,255,255,0) 0, rgba(255,255,255,.07) 16px, transparent 32px, transparent 137px),
    linear-gradient(#0f1f4c, #1b2d68);
}
.slide-title {
  font-size: 69px;
  line-height: 80px;
  font-weight: 700;
}
.slide-sub {
  font-size: 34.5px;
  line-height: 44px;
  font-weight: 700;
  margin-top: 43px;
}
.slide-btn {
  width: 236px;
  height: 96px;
  margin-top: 60px;
  border-radius: 6px;
  background: #f9d355;
  color: #000a2c;
  display: flex;
  align-items: center;
  justify-content: center;
  font-size: 30px;
  font-weight: 700;
}
.slide-terms {
  font-size: 15px;
  line-height: 20px;
  font-weight: 600;
  margin-top: 58px;
}
.slide-controls {
  position: absolute;
  left: 1144px;
  top: 487px;
  display: flex;
  align-items: center;
  gap: 16px;
}
.dot {
  width: 16px;
  height: 16px;
  border-radius: 50%;
  background: #fff;
}
.dot.on {
  background: #f9d355;
}
.arrow {
  width: 81px;
  height: 81px;
  border-radius: 50%;
  background: #fff;
  margin-left: 5px;
  display: flex;
  align-items: center;
  justify-content: center;
}
.arrow.first {
  margin-left: 49px;
}
.arrow svg {
  width: 28px;
  height: 22px;
}
.crumbs {
  margin-top: 70px;
  display: flex;
  align-items: center;
  height: 32px;
  font-size: 25.3px;
  color: #444;
}
.crumbs svg {
  width: 10px;
  height: 16px;
  margin: 0 24px 0 22px;
}
.crumbs b {
  font-weight: 600;
  letter-spacing: .03em;
}
.venue-name {
  margin-top: 60px;
  font-size: 52px;
  line-height: 64px;
  font-weight: 700;
  color: #1a1a1a;
}
.venue {
  margin-top: 18px;
  display: flex;
}

/* map */
.map {
  width: 1409px;
  height: 765px;
  flex: none;
  background: #f1f3f4;
  font-family: Roboto, sans-serif;
  letter-spacing: 0;
}
.map path:not([fill]) {
  fill: none;
}
.map path {
  vector-effect: non-scaling-stroke;
  stroke-linejoin: round;
  stroke-linecap: round;
}
.m-town { fill: #fdf5df; }
.m-park { fill: #c8e2cd; }
.m-water { fill: #a3c0f5; }
.map .m-river { stroke: #a3c0f5; }
.m-case { stroke: #dcdee2; stroke-width: 6px; }
.m-minor { stroke: #fff; stroke-width: 3.6px; }
.map .m-road { stroke: #fff; }
.m-round { fill: #f1f3f4; stroke: #fff; stroke-width: 18; }
.map .m-rail path { stroke: #d5d7db; stroke-width: 1.5px; }
.map .m-path { stroke: #62ad6c; stroke-width: 1.2px; }
.map .m-path.dash { stroke-dasharray: 7 5; }
.map .w2 { stroke-width: 2px; }
.map .w6 { stroke-width: 6px; }
.map .w7 { stroke-width: 7px; }
.map .w8 { stroke-width: 8px; }
.map .w9 { stroke-width: 9px; }
.map .w10 { stroke-width: 10px; }
.map .w11 { stroke-width: 11px; }
.map .w12 { stroke-width: 12px; }
.map .w14 { stroke-width: 14px; }
.map .w17 { stroke-width: 17px; }
.m-names text {
  font-size: 24px;
  fill: #3c4043;
  text-anchor: middle;
  dominant-baseline: central;
  paint-order: stroke;
  stroke: #fff;
  stroke-width: 3px;
}
.m-names.small text {
  font-size: 21.5px;
  fill: #5f6368;
}
.m-label {
  font-size: 28px;
  paint-order: stroke;
  stroke: #fff;
  stroke-width: 3px;
}
.m-label.end { text-anchor: end; }
.m-label.station { font-size: 25.5px; }
.m-label.river { font-size: 25px; fill: #3b6fd4; stroke: #a3c0f5; stroke-width: 1px; }
.l-blue { fill: #3b78e7; }
.l-red { fill: #c5372c; font-weight: 500; }
.l-slate { fill: #5b6f7d; }
.l-purple { fill: #5c6bc0; }
.l-orange { fill: #c56a12; }
.l-green { fill: #2e7d32; }
.l-pink { fill: #d81b60; }
.m-town-name {
  font-size: 32px;
  fill: #202124;
  paint-order: stroke;
  stroke: #fff;
  stroke-width: 3px;
}
.pin-p {
  font-size: 26px;
  font-weight: 700;
  fill: #fff;
  text-anchor: middle;
}

/* venue details */
.details {
  padding: 32px 0 0 32px;
  display: flex;
  flex-direction: column;
  align-items: flex-start;
}
.detail-row {
  display: flex;
  gap: 16px;
}
.detail-icon {
  width: 40px;
  height: 40px;
  flex: none;
}
.address {
  font-size: 21px;
  line-height: 42px;
  font-weight: 500;
  color: #222;
}
.act {
  margin-left: 56px;
  border-radius: 8px;
  display: flex;
  align-items: center;
  font-size: 20.4px;
  font-weight: 700;
}
.act-directions {
  margin-top: 30px;
  width: 273px;
  height: 72px;
  background: #f9d355;
  padding-left: 27px;
  gap: 19px;
}
.act-directions svg {
  width: 26px;
  height: 32px;
}
.act-phone {
  margin-top: 20px;
  width: 210px;
  height: 68px;
  background: #e8e8e8;
  padding-left: 26px;
  gap: 20px;
  letter-spacing: 0;
}
.act-phone svg {
  width: 24px;
  height: 24px;
}
.hours-row {
  margin-top: 33px;
}
.hours {
  font-size: 21.3px;
  color: #4a4a4a;
  font-weight: 500;
}
.hours-title {
  font-weight: 700;
  line-height: 30px;
  margin-top: 9px;
}
.hours-grid {
  display: grid;
  grid-template-columns: 161px auto;
  grid-auto-rows: 30px;
  align-items: center;
  margin-top: 3px;
}
.hours-grid span:nth-child(even) {
  font-size: 20.2px;
  letter-spacing: 0;
}
.act-feedback {
  margin-top: 32px;
  width: 268px;
  height: 64px;
  border: 2px solid #000a2c;
  padding-left: 22px;
  gap: 9px;
  font-size: 21.2px;
}
.act-feedback svg {
  width: 22px;
  height: 22px;
}

/* browser scrollbar sitting on the page */
.scroll-thumb {
  position: fixed;
  top: 4px;
  right: 4px;
  width: 14px;
  height: 543px;
  border-radius: 7px;
  background: rgba(0, 0, 0, .5);
}
```
